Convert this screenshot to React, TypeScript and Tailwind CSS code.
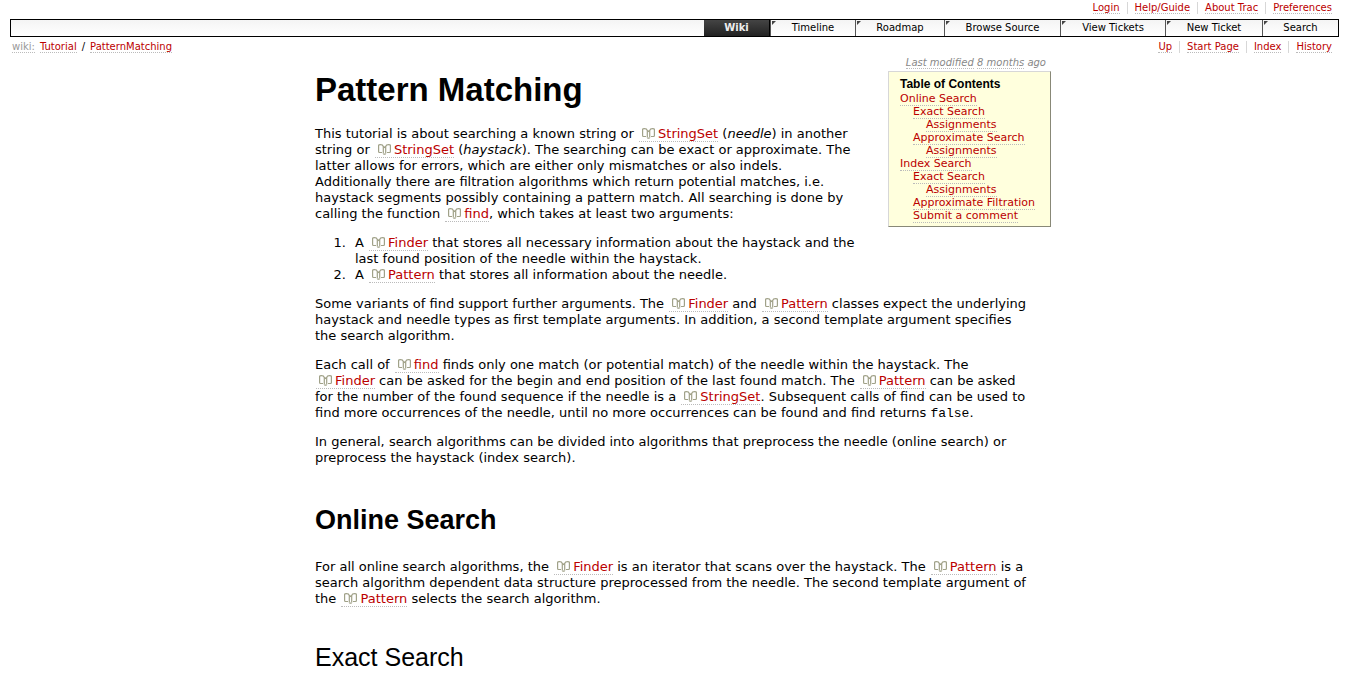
import type { ReactNode } from "react";

const tabs = [
  { label: "Timeline", width: "w-[85px]" },
  { label: "Roadmap", width: "w-[89px]" },
  { label: "Browse Source", width: "w-[116px]" },
  { label: "View Tickets", width: "w-[105px]" },
  { label: "New Ticket", width: "w-[97px]" },
  { label: "Search", width: "w-[76px]" },
];

const contents = [
  { label: "Online Search", indent: "" },
  { label: "Exact Search", indent: "pl-[13px]" },
  { label: "Assignments", indent: "pl-[26px]" },
  { label: "Approximate Search", indent: "pl-[13px]" },
  { label: "Assignments", indent: "pl-[26px]" },
  { label: "Index Search", indent: "" },
  { label: "Exact Search", indent: "pl-[13px]" },
  { label: "Assignments", indent: "pl-[26px]" },
  { label: "Approximate Filtration", indent: "pl-[13px]" },
  { label: "Submit a comment", indent: "pl-[13px]" },
];

function Link({ children }: { children: ReactNode }) {
  return (
    <a href="#" className="border-b border-dotted border-[#bbb] text-[#b00]">
      {children}
    </a>
  );
}

function DocLink({ children }: { children: ReactNode }) {
  return (
    <a href="#" className="ml-px border-b border-dotted border-[#bbb] pl-[3px] text-[#b00]">
      <svg
        viewBox="0 0 13 11"
        className="mr-[3px] inline h-[11px] w-[13px] align-[-1px]"
        fill="none"
        stroke="#a0a188"
        strokeWidth="1.2"
        aria-hidden="true"
      >
        <path d="M4 8.500H1.500Q.6 8.500 .6 7.500V1.600Q.6 .6 2.500 .6Q4.800 .6 5.300 2.500V9.500" />
        <path d="M9 8.500H11.500Q12.400 8.500 12.400 7.500V1.600Q12.400 .6 10.500 .6Q8.200 .6 7.700 2.500V9.500" />
        <path d="M5.300 2.500L6.500 3.500L7.700 2.500M5.300 10.200H7.700" />
      </svg>
      {children}
    </a>
  );
}

function LinkRow({ items }: { items: string[] }) {
  return (
    <ul className="flex items-start">
      {items.map((item, i) => (
        <li key={item} className={i ? "ml-[7px] border-l border-[#d7d7d7] pl-[7px]" : ""}>
          <Link>{item}</Link>
        </li>
      ))}
    </ul>
  );
}

export default function App() {
  return (
    <div className="min-h-screen overflow-x-hidden bg-white font-['Verdana','DejaVu_Sans',sans-serif] text-[13px] leading-4 text-black">
      <header className="px-[10px] text-[10px] leading-3">
        <div className="flex h-[19px] justify-end pt-[2px] pr-[7px]">
          <LinkRow items={["Login", "Help/Guide", "About Trac", "Preferences"]} />
        </div>
        <nav className="flex h-[18px] justify-end border border-black bg-linear-to-b from-[#f4f4f4] to-white">
          <a
            href="#"
            className="flex w-[66px] items-center justify-center border-r border-black bg-linear-to-b from-[#444] via-[#333] to-[#222] font-bold text-[#eee]"
          >
            Wiki
          </a>
          {tabs.map((tab) => (
            <a
              key={tab.label}
              href="#"
              className={`relative flex items-center justify-center border-l border-[#555] ${tab.width}`}
            >
              <svg viewBox="0 0 4 4" className="absolute top-px left-px size-1" aria-hidden="true">
                <path d="M0 0H4L0 4Z" fill="#444" />
              </svg>
              {tab.label}
            </a>
          ))}
        </nav>
        <div className="flex justify-between pt-[4px] pr-[7px] pb-px pl-[2px]">
          <ul className="flex gap-[5px]">
            <li>
              <a href="#" className="border-b border-dotted border-[#bbb] text-[#999]">
                wiki:
              </a>
            </li>
            <li>
              <Link>Tutorial</Link>
            </li>
            <li>/</li>
            <li>
              <Link>PatternMatching</Link>
            </li>
          </ul>
          <LinkRow items={["Up", "Start Page", "Index", "History"]} />
        </div>
      </header>

      <main className="mx-auto max-w-[753px] pl-[17px]">
        <aside className="float-right ml-4 pt-[2px]">
          <p className="pr-[5px] text-right text-[10px] leading-[14px] text-[#888] italic">
            <a href="#" className="border-b border-dotted border-[#bbb]">Last modified</a>{" "}
            <a href="#" className="border-b border-dotted border-[#bbb]">8 months</a> ago
          </p>
          <nav className="mt-px w-[163px] border border-t-[#d7d7d7] border-r-[#887] border-b-[#887] border-l-[#d7d7d7] bg-[#ffffdd] pt-[5px] pb-1 pl-[11px] text-[11px] leading-[13px] whitespace-nowrap">
            <h4 className="font-['Liberation_Sans',sans-serif] text-[12px] leading-[15px] font-bold">
              Table of Contents
            </h4>
            <ul>
              {contents.map((entry, i) => (
                <li key={i} className={entry.indent}>
                  <Link>{entry.label}</Link>
                </li>
              ))}
            </ul>
          </nav>
        </aside>

        <h1 className="pt-[17px] font-['Liberation_Sans',sans-serif] text-[33px] leading-[38px] font-bold">
          Pattern Matching
        </h1>
        <p className="mt-[17px]">
          This tutorial is about searching a known string or <DocLink>StringSet</DocLink> (<em>needle</em>) in another
          <br />
          string or <DocLink>StringSet</DocLink> (<em>haystack</em>). The searching can be exact or approximate. The
          <br />
          latter allows for errors, which are either only mismatches or also indels.
          <br />
          Additionally there are filtration algorithms which return potential matches, i.e.
          <br />
          haystack segments possibly containing a pattern match. All searching is done by
          <br />
          calling the function <DocLink>find</DocLink>, which takes at least two arguments:
        </p>
        <ol className="mt-[13px] list-decimal pl-[35px]">
          <li className="pl-[5px]">
            A <DocLink>Finder</DocLink> that stores all necessary information about the haystack and the
            <br />
            last found position of the needle within the haystack.
          </li>
          <li className="pl-[5px]">
            A <DocLink>Pattern</DocLink> that stores all information about the needle.
          </li>
        </ol>
        <p className="mt-[13px]">
          Some variants of find support further arguments. The <DocLink>Finder</DocLink> and{" "}
          <DocLink>Pattern</DocLink> classes expect the underlying
          <br />
          haystack and needle types as first template arguments. In addition, a second template argument specifies
          <br />
          the search algorithm.
        </p>
        <p className="mt-[13px]">
          Each call of <DocLink>find</DocLink> finds only one match (or potential match) of the needle within the
          haystack. The
          <br />
          <DocLink>Finder</DocLink> can be asked for the begin and end position of the last found match. The{" "}
          <DocLink>Pattern</DocLink> can be asked
          <br />
          for the number of the found sequence if the needle is a <DocLink>StringSet</DocLink>. Subsequent calls of
          find can be used to
          <br />
          find more occurrences of the needle, until no more occurrences can be found and find returns{" "}
          <code className="font-['Liberation_Mono',monospace] text-[13px] leading-3">false</code>.
        </p>
        <p className="mt-[13px]">
          In general, search algorithms can be divided into algorithms that preprocess the needle (online search) or
          <br />
          preprocess the haystack (index search).
        </p>
        <h2 className="mt-[38px] font-['Liberation_Sans',sans-serif] text-[27px] leading-[32px] font-bold">
          Online Search
        </h2>
        <p className="mt-[23px]">
          For all online search algorithms, the <DocLink>Finder</DocLink> is an iterator that scans over the haystack.
          The <DocLink>Pattern</DocLink> is a
          <br />
          search algorithm dependent data structure preprocessed from the needle. The second template argument of
          <br />
          the <DocLink>Pattern</DocLink> selects the search algorithm.
        </p>
        <h3 className="mt-[35px] font-['Liberation_Sans',sans-serif] text-[25px] leading-[30px]">Exact Search</h3>
      </main>
    </div>
  );
}
